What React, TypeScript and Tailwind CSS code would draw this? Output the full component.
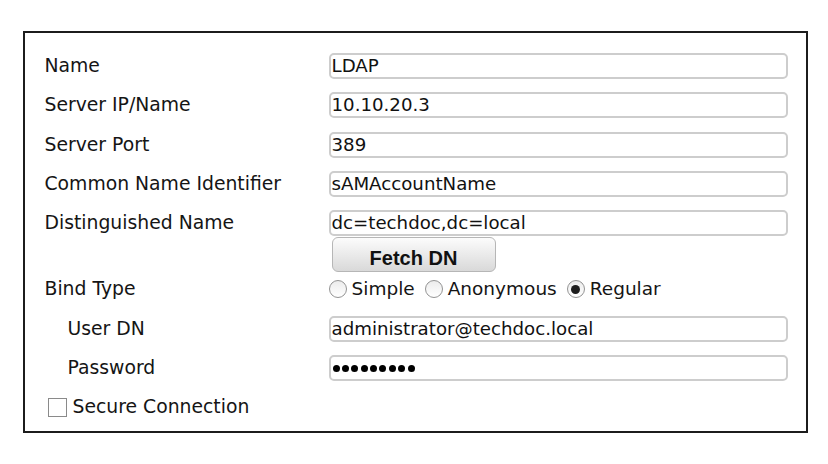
const FIELDS = [
  { label: "Name", value: "LDAP" },
  { label: "Server IP/Name", value: "10.10.20.3" },
  { label: "Server Port", value: "389" },
  { label: "Common Name Identifier", value: "sAMAccountName" },
];

const font = { fontFamily: '"DejaVu Sans", Verdana, sans-serif' };

function TextBox({ value }: { value: string }) {
  return (
    <div className="h-[26px] w-[459px] rounded-[5px] border-2 border-[#cdcdcd] bg-white px-[1px] flex items-center text-[18.2px] text-[#111] leading-none whitespace-nowrap">
      {value}
    </div>
  );
}

function Radio({ label, checked }: { label: string; checked?: boolean }) {
  return (
    <label className="flex items-center gap-[5px]">
      <span className="w-[18px] h-[18px] rounded-full border-[1.5px] border-[#939393] bg-gradient-to-b from-[#ececec] to-white flex items-center justify-center">
        {checked && <span className="w-[9px] h-[9px] rounded-full bg-[#1e1e1e]" />}
      </span>
      <span>{label}</span>
    </label>
  );
}

export default function App() {
  return (
    <div className="w-[828px] h-[464px] bg-white pt-[31px] pl-[23px]" style={font}>
      <div className="w-[785px] border-[2.5px] border-[#1c1c1c] pt-[20px] pb-[14px] pl-[19.5px] text-[#151515]">
        <div className="flex flex-col">
          {FIELDS.map((f, i) => (
            <div key={f.label} className={`flex items-center ${i === 0 ? "" : i === 2 ? "mt-[14px]" : "mt-[13px]"}`}>
              <span className="w-[284px] text-[18.8px] leading-none">{f.label}</span>
              <TextBox value={f.value} />
            </div>
          ))}

          {/* distinguished name + fetch */}
          <div className="flex mt-[13px]">
            <span className="w-[284px] h-[26px] flex items-center text-[18.8px] leading-none">Distinguished Name</span>
            <div className="flex flex-col">
              <TextBox value="dc=techdoc,dc=local" />
              <button className="mt-[1px] ml-[3px] w-[164px] h-[35px] pt-[6px] rounded-[6px] border-[1.5px] border-[#b6b6b6] bg-gradient-to-b from-[#fcfcfc] to-[#d9d9d9] text-[20px] font-bold text-[#111] leading-none" style={{ fontFamily: '"Liberation Sans", Arial, sans-serif' }}>
                Fetch DN
              </button>
            </div>
          </div>

          <div className="flex items-center mt-[4px] h-[26px]">
            <span className="w-[284px] text-[18.8px] leading-none">Bind Type</span>
            <div className="flex items-center gap-[10px] text-[18.5px] leading-none">
              <Radio label="Simple" />
              <Radio label="Anonymous" />
              <Radio label="Regular" checked />
            </div>
          </div>

          <div className="flex items-center mt-[14px]">
            <span className="w-[284px] pl-[23px] text-[18.8px] leading-none">User DN</span>
            <TextBox value="administrator@techdoc.local" />
          </div>

          <div className="flex items-center mt-[13px]">
            <span className="w-[284px] pl-[23px] text-[18.8px] leading-none">Password</span>
            <div className="h-[26px] w-[459px] rounded-[5px] border-2 border-[#cdcdcd] bg-white pl-[2px] flex items-center gap-[2.4px]">
              {Array.from({ length: 9 }).map((_, i) => (
                <span key={i} className="w-[7px] h-[7px] rounded-full bg-black" />
              ))}
            </div>
          </div>

          <label className="flex items-center gap-[6px] mt-[17px] ml-[3px] text-[18.8px] leading-none">
            <span className="w-[19px] h-[19px] border-[1.5px] border-[#8a8a8a] bg-white" />
            <span>Secure Connection</span>
          </label>
        </div>
      </div>
    </div>
  );
}
